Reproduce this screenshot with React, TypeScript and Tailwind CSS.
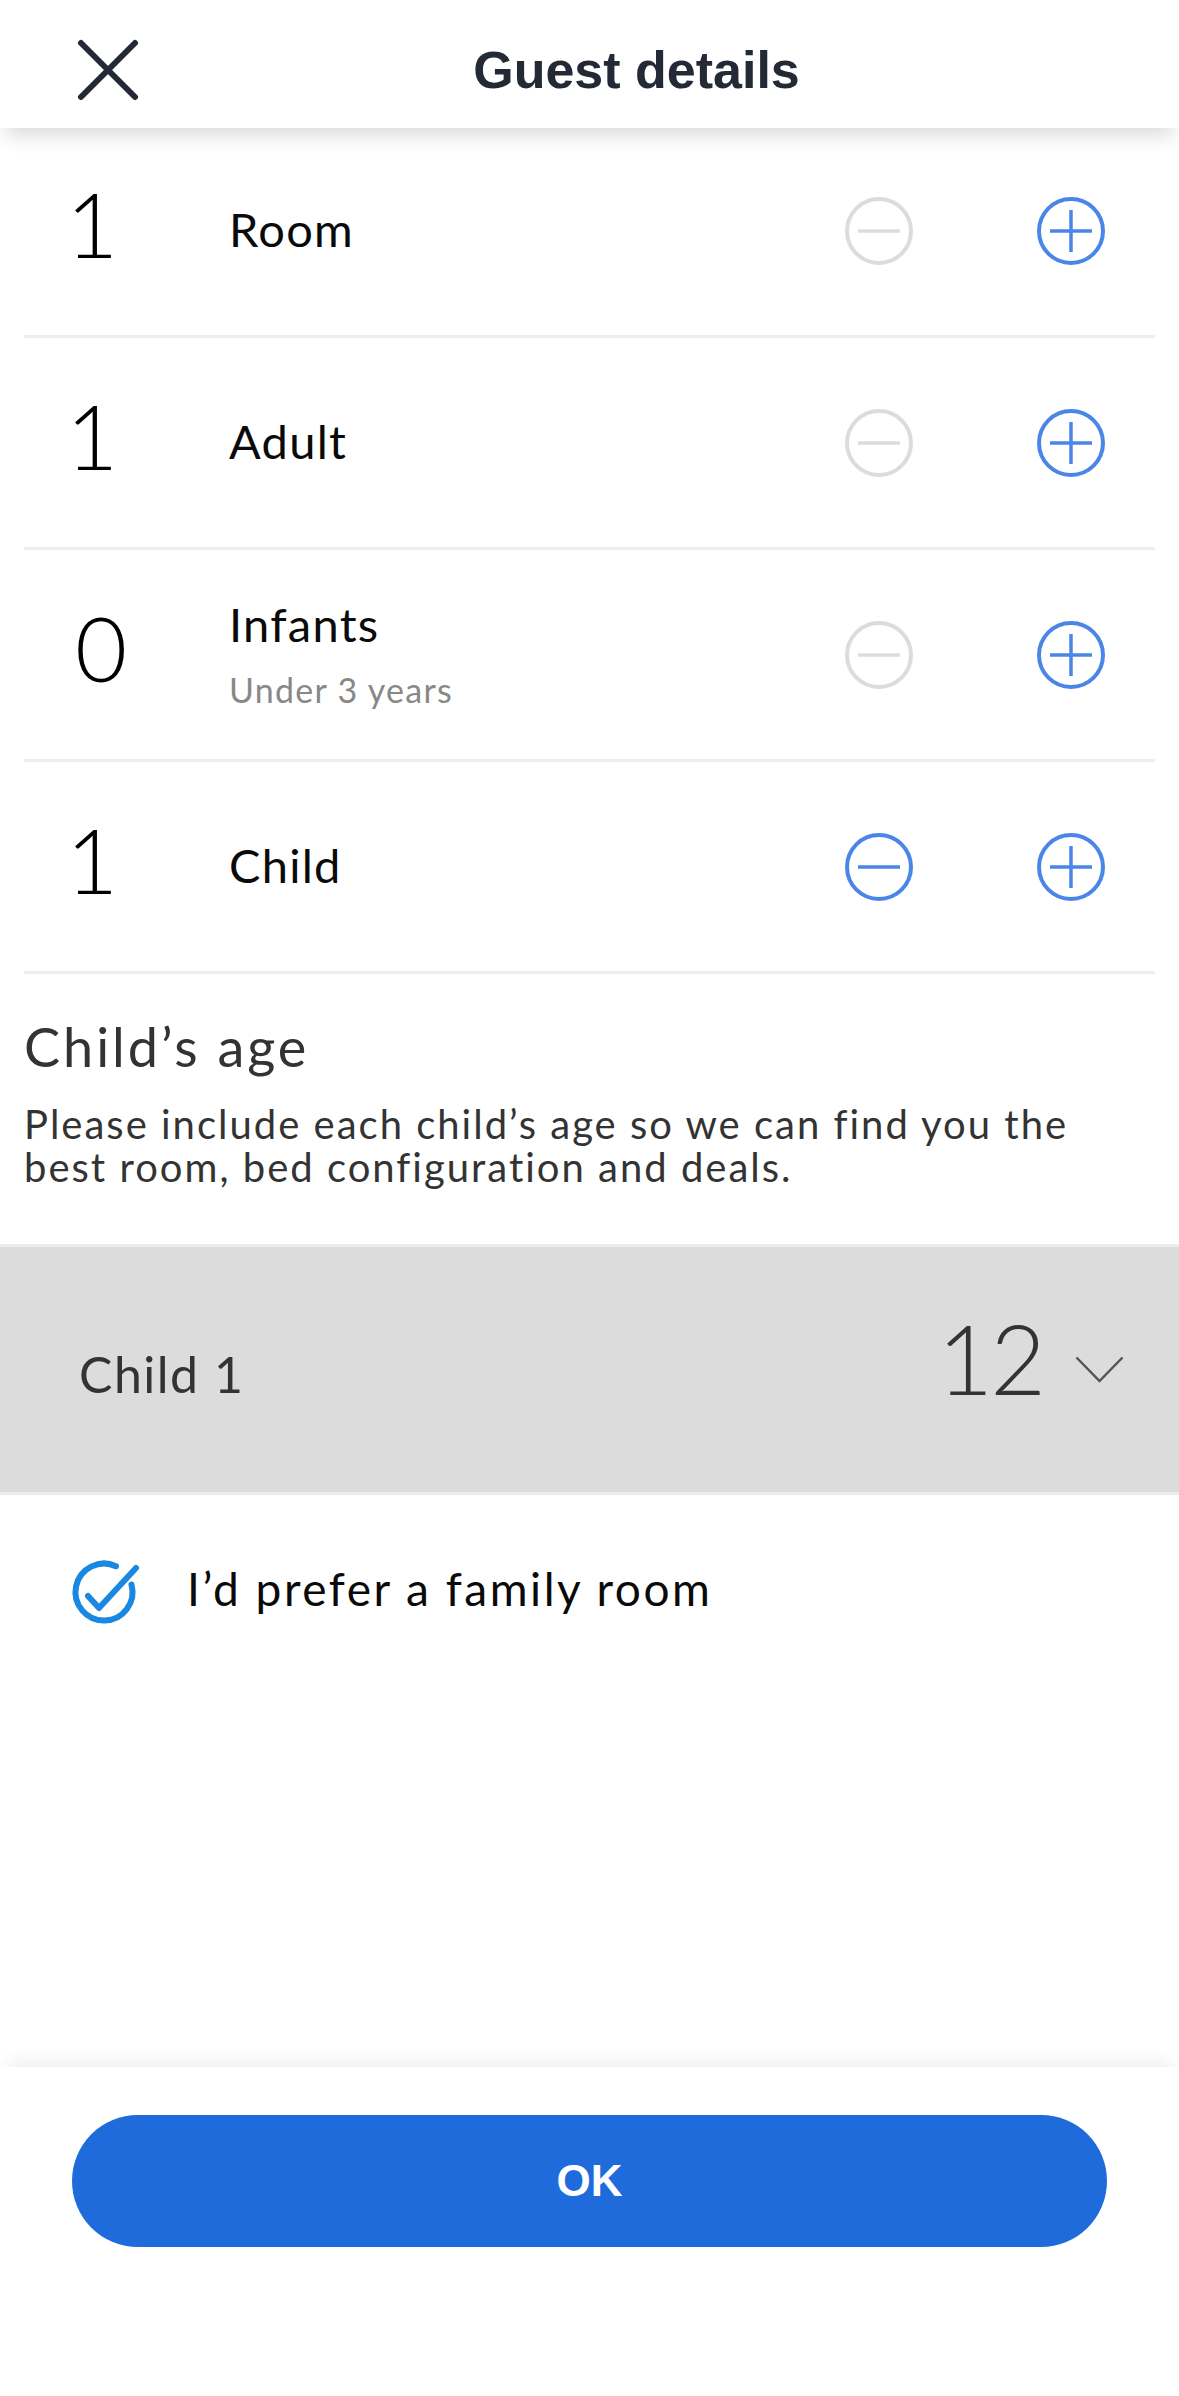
import React from "react";

const rows = [
  { count: 1, label: "Room", enabled: false },
  { count: 1, label: "Adult", enabled: false },
  { count: 0, label: "Infants", sub: "Under 3 years", enabled: false },
  { count: 1, label: "Child", enabled: true },
];

const body = { fontFamily: "Lato, 'Open Sans', sans-serif" };
const sys = { fontFamily: "'Liberation Sans', Arial, sans-serif" };

function StepButton({ kind, active }: { kind: "minus" | "plus"; active: boolean }) {
  const color = active ? "#4a86e8" : "#dcdcdc";
  return (
    <svg width="68" height="68" viewBox="0 0 68 68" fill="none">
      <circle cx="34" cy="34" r="32" stroke={color} strokeWidth="4" />
      <line x1="13" y1="34" x2="55" y2="34" stroke={color} strokeWidth="3.5" />
      {kind === "plus" && <line x1="34" y1="13" x2="34" y2="55" stroke={color} strokeWidth="3.5" />}
    </svg>
  );
}

function CounterRow({ count, label, sub, enabled }: { count: number; label: string; sub?: string; enabled: boolean }) {
  return (
    <div className="mx-[24px] flex h-[212px] items-center border-b-[3px] border-[#eeeeee]">
      <div className={`mb-[16px] w-[205px] text-[90px] font-light leading-none text-black ${count === 1 ? "pl-[42px]" : "pl-[51px]"}`}>
        {count}
      </div>
      <div className="mb-[4px] flex-1 tracking-[0.08em]">
        <div className="text-[47px] leading-[56px] text-[#0a0a0a]">{label}</div>
        {sub && <div className="mt-[18px] text-[34px] leading-[40px] text-[#888888]">{sub}</div>}
      </div>
      <div className="mr-[50px] flex items-center gap-[124px]">
        <StepButton kind="minus" active={enabled} />
        <StepButton kind="plus" active={true} />
      </div>
    </div>
  );
}

export default function App() {
  return (
    <div className="flex h-screen flex-col overflow-hidden bg-white" style={body}>
      {/* Header */}
      <header className="relative z-10 flex h-[128px] shrink-0 items-center bg-white pt-[12px] shadow-[0_14px_18px_-6px_rgba(0,0,0,0.14)]">
        <svg className="ml-[76px]" width="64" height="64" viewBox="0 0 64 64" fill="none">
          <path d="M5 5 L59 59 M59 5 L5 59" stroke="#232a35" strokeWidth="6" strokeLinecap="round" />
        </svg>
        <h1 className="mr-[46px] flex-1 text-center text-[52px] font-bold text-[#232a35]" style={sys}>
          Guest details
        </h1>
      </header>

      {/* Counters */}
      <div className="-mt-[2px]">
        {rows.map((r) => (
          <CounterRow key={r.label} {...r} />
        ))}
      </div>

      {/* Child's age */}
      <section className="px-[24px] pb-[55px] pt-[42px] text-[#333333]">
        <h2 className="text-[54px] leading-[62px] tracking-[0.055em]">Child’s age</h2>
        <p className="mt-[25px] pr-[56px] text-[40px] leading-[43px] tracking-[0.05em]">
          Please include each child’s age so we can find you the best room, bed configuration and deals.
        </p>
      </section>

      <div className="flex h-[251px] shrink-0 items-center border-y-[3px] border-[#ebebeb] bg-[#dcdcdc] pl-[79px] pr-[55px] text-[#333333]">
        <span className="mt-[9px] flex-1 text-[50px] leading-none tracking-[0.03em]">Child 1</span>
        <span className="mb-[24px] text-[96px] font-light leading-none tracking-[-0.03em]">12</span>
        <svg className="ml-[32px]" width="49" height="27" viewBox="0 0 49 27" fill="none">
          <path d="M1.5 1.5 L24.5 25 L47.5 1.5" stroke="#555555" strokeWidth="2.5" />
        </svg>
      </div>

      {/* Family room */}
      <div className="flex h-[194px] shrink-0 items-center pl-[64px]">
        <svg width="80" height="80" viewBox="0 0 80 80" fill="none">
          <path d="M67.5 32.6 A28.5 28.5 0 1 1 52 14.2" stroke="#1a88e0" strokeWidth="6" strokeLinecap="round" />
          <path d="M24 44 L35 56 L72 16" stroke="#1a88e0" strokeWidth="6" strokeLinecap="round" strokeLinejoin="round" />
        </svg>
        <span className="mb-[6px] ml-[43px] text-[46px] leading-none tracking-[0.055em] text-[#0a0a0a]">I’d prefer a family room</span>
      </div>

      <div className="flex-1" />

      {/* Footer */}
      <footer className="h-[329px] shrink-0 bg-white px-[72px] pt-[48px] shadow-[0_-12px_18px_-8px_rgba(0,0,0,0.08)]">
        <button className="flex h-[132px] w-full items-center justify-center rounded-full bg-[#206bdb] text-[44px] font-bold text-white" style={sys}>
          OK
        </button>
      </footer>
    </div>
  );
}
